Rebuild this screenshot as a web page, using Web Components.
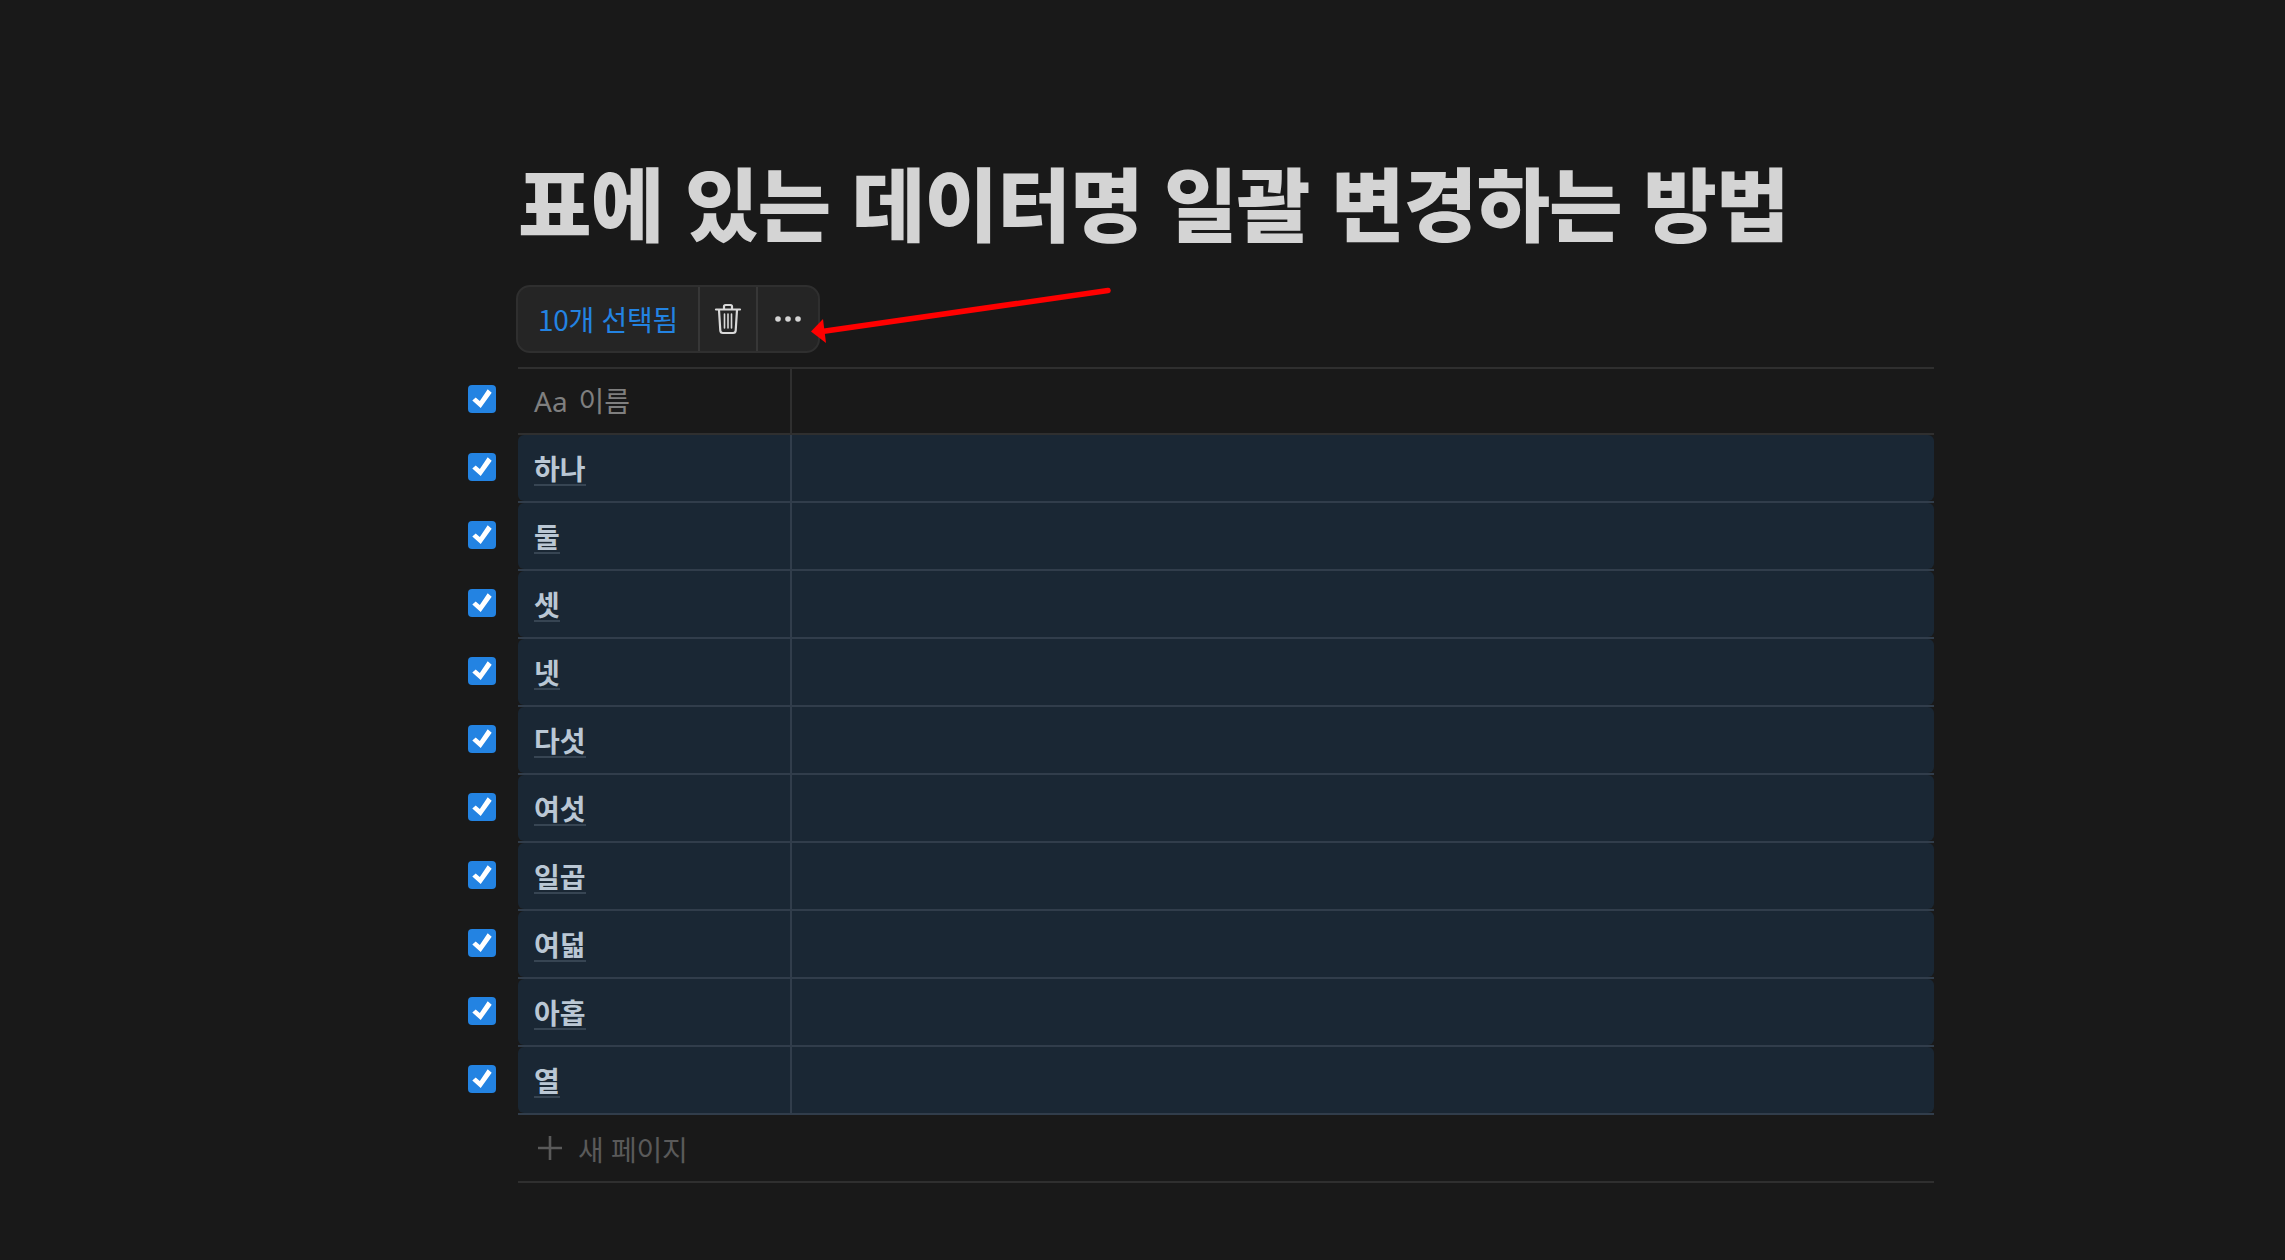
<!DOCTYPE html>
<html lang="ko">
<head>
<meta charset="utf-8">
<title>표에 있는 데이터명 일괄 변경하는 방법</title>
<style>
  html, body { margin: 0; background: #191919; }
  body { font-family: "Noto Sans CJK KR", "Noto Sans", sans-serif; width: 2285px; height: 1260px; overflow: hidden; position: relative; }
</style>
</head>
<body>
<notion-page>
  <span slot="title">표에 있는 데이터명 일괄 변경하는 방법</span>
  <selection-bar slot="toolbar">10개 선택됨</selection-bar>
  <table-head slot="rows">이름</table-head>
  <table-row slot="rows">하나</table-row>
  <table-row slot="rows">둘</table-row>
  <table-row slot="rows">셋</table-row>
  <table-row slot="rows">넷</table-row>
  <table-row slot="rows">다섯</table-row>
  <table-row slot="rows">여섯</table-row>
  <table-row slot="rows">일곱</table-row>
  <table-row slot="rows">여덟</table-row>
  <table-row slot="rows">아홉</table-row>
  <table-row slot="rows">열</table-row>
  <new-row slot="rows">새 페이지</new-row>
</notion-page>
<red-arrow></red-arrow>

<script>
const CHECK = `<svg style="display:block;width:28px;height:28px;border-radius:4px;background:#2383e2" viewBox="0 0 28 28"><path d="M4.300 15.500 L7.700 12.500 L11.800 16 L19.700 4.300 L23.700 7.800 L12.700 23 Z" fill="#fff"/></svg>`;

class NotionPage extends HTMLElement {
  connectedCallback() {
    this.attachShadow({ mode: 'open' });
    this.shadowRoot.innerHTML = `
      <style>
        :host { display: block; width: 1466px; margin-left: 468px; padding-top: 144px; color: #d4d4d4; }
        h1 { margin: 0 0 0 50px; font-size: 80px; line-height: 113px; font-weight: 900; letter-spacing: -0.9px; height: 116px; white-space: nowrap; color: #d4d4d4; }
        .bar { margin: 25px 0 14px 48px; height: 68px; }
      </style>
      <h1><slot name="title"></slot></h1>
      <div class="bar"><slot name="toolbar"></slot></div>
      <slot name="rows"></slot>
    `;
  }
}

class SelectionBar extends HTMLElement {
  connectedCallback() {
    this.attachShadow({ mode: 'open' });
    this.shadowRoot.innerHTML = `
      <style>
        :host { display: inline-flex; height: 68px; box-sizing: border-box; background: #252525; border: 2px solid #2f2f2f; border-radius: 14px; }
        .text { width: 180px; box-sizing: border-box; padding-left: 20px; color: #2383e2; font-size: 28px; letter-spacing: -0.3px; line-height: 64px; white-space: nowrap; }
        .btn { display: flex; align-items: center; justify-content: center; border-left: 2px solid #373737; }
        .trash { width: 56px; }
        .more { width: 60px; }
        svg { display: block; }
      </style>
      <div class="text"><slot></slot></div>
      <div class="btn trash">
        <svg width="28" height="32" viewBox="0 0 28 32" fill="none" stroke="#d9d9d9" stroke-width="2.2" stroke-linecap="round" stroke-linejoin="round">
          <path d="M2 6.500h24"/>
          <path d="M10 6V3.500c0-1 .7-1.500 1.500-1.500h5c.8 0 1.500.5 1.500 1.500V6"/>
          <path d="M5 7l1.300 20.500c.1 1.500 1.100 2.500 2.600 2.500h10.200c1.500 0 2.500-1 2.600-2.500L23 7"/>
          <path d="M10.500 11v14M14 11v14M17.500 11v14" stroke-width="1.600"/>
        </svg>
      </div>
      <div class="btn more">
        <svg width="28" height="8" viewBox="0 0 28 8" fill="#d4d4d4"><circle cx="4" cy="4" r="2.800"/><circle cx="14" cy="4" r="2.800"/><circle cx="24" cy="4" r="2.800"/></svg>
      </div>
    `;
  }
}

class TableHead extends HTMLElement {
  connectedCallback() {
    this.attachShadow({ mode: 'open' });
    this.shadowRoot.innerHTML = `
      <style>
        :host { display: flex; height: 68px; }
        .gutter { width: 50px; padding-top: 18px; box-sizing: border-box; }
        .main { flex: 1; box-sizing: border-box; display: flex; border-top: 2px solid #2f2f2f; border-bottom: 2px solid #2f2f2f; }
        .name { width: 256px; padding-left: 16px; border-right: 2px solid #2f2f2f; color: #7f7f7f; font-size: 28px; line-height: 62px; white-space: nowrap; }
        .aa { margin-right: 11px; font-family: "Noto Sans", sans-serif; }
      </style>
      <div class="gutter">${CHECK}</div>
      <div class="main"><div class="name"><span class="aa">Aa</span><slot></slot></div></div>
    `;
  }
}

class TableRow extends HTMLElement {
  connectedCallback() {
    this.attachShadow({ mode: 'open' });
    this.shadowRoot.innerHTML = `
      <style>
        :host { display: flex; height: 68px; }
        .gutter { width: 50px; padding-top: 18px; box-sizing: border-box; }
        .main { flex: 1; border-bottom: 2px solid #313d4b; }
        .fill { height: 66px; display: flex; background: #1a2734; border-radius: 6px; }
        .name { width: 256px; padding-left: 16px; border-right: 2px solid #313d4b; color: #bac7d4; font-size: 28px; font-weight: 700; white-space: nowrap; }
        .label { display: inline-block; line-height: 36px; height: 34px; margin-top: 13px; padding-top: 2px; border-bottom: 2px solid #374553; }
      </style>
      <div class="gutter">${CHECK}</div>
      <div class="main"><div class="fill"><div class="name"><span class="label"><slot></slot></span></div></div></div>
    `;
  }
}

class NewRow extends HTMLElement {
  connectedCallback() {
    this.attachShadow({ mode: 'open' });
    this.shadowRoot.innerHTML = `
      <style>
        :host { display: block; height: 68px; margin-left: 50px; box-sizing: border-box; border-bottom: 2px solid #2f2f2f; }
        .in { display: flex; align-items: center; height: 66px; padding-left: 20px; gap: 16px; color: #5a5a5a; font-size: 28px; letter-spacing: -0.3px; white-space: nowrap; }
        span { padding-top: 2px; }
        svg { display: block; }
      </style>
      <div class="in">
        <svg width="24" height="24" viewBox="0 0 24 24" stroke="#5a5a5a" stroke-width="2.6"><path d="M12 0v24M0 12h24"/></svg>
        <span><slot></slot></span>
      </div>
    `;
  }
}

class RedArrow extends HTMLElement {
  connectedCallback() {
    this.attachShadow({ mode: 'open' });
    this.shadowRoot.innerHTML = `
      <style>
        :host { position: absolute; left: 800px; top: 280px; display: block; }
        svg { display: block; }
      </style>
      <svg width="320" height="70" viewBox="800 280 320 70">
        <path d="M1108 290.500 L822 331.500" stroke="#ff0000" stroke-width="5.500" stroke-linecap="round"/>
        <path d="M811 331.500 L823 319 L826 343 Z" fill="#ff0000"/>
      </svg>
    `;
  }
}

customElements.define('notion-page', NotionPage);
customElements.define('selection-bar', SelectionBar);
customElements.define('table-head', TableHead);
customElements.define('table-row', TableRow);
customElements.define('new-row', NewRow);
customElements.define('red-arrow', RedArrow);
</script>
</body>
</html>
